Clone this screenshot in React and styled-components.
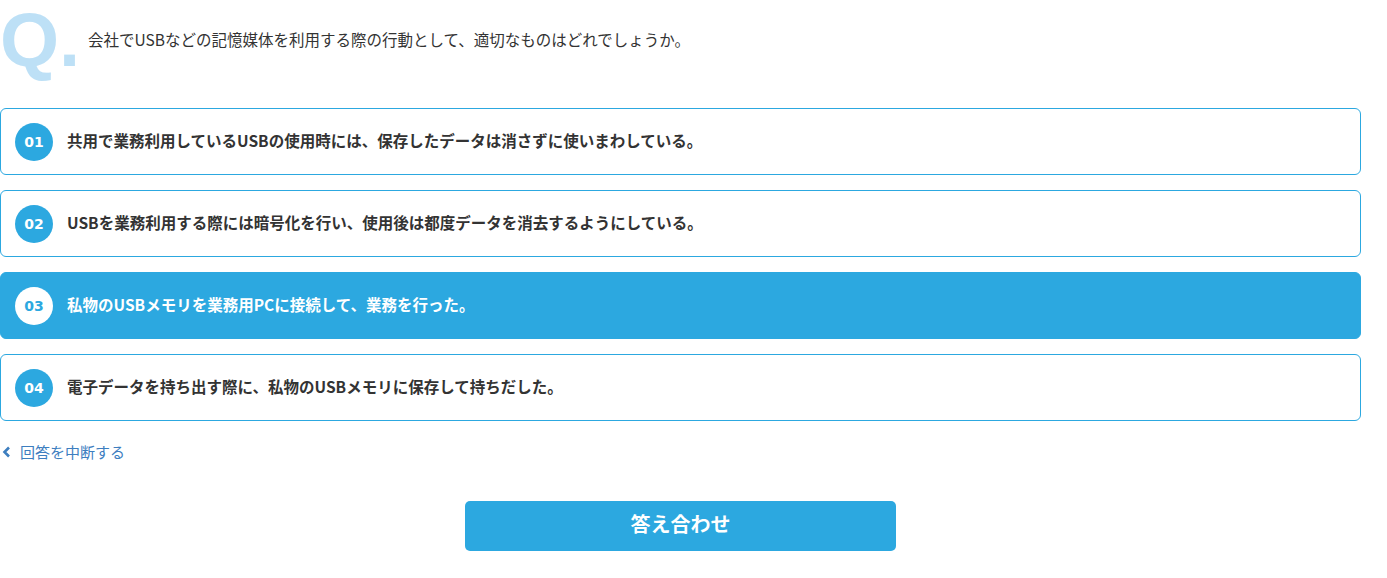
import React from "react";
import styled, { createGlobalStyle } from "styled-components";

const Global = createGlobalStyle`
  html, body { margin: 0; padding: 0; background: #fff; }
  body { font-family: "Noto Sans CJK JP", "Noto Sans", sans-serif; color: #333; }
`;

const Page = styled.div`
  width: 1361px;
  display: flex;
  flex-direction: column;
`;

const Question = styled.div`
  display: flex;
  align-items: flex-start;
  height: 108px;
`;

const QMark = styled.div`
  font-family: "Liberation Sans", Arial, sans-serif;
  font-weight: bold;
  font-size: 76px;
  line-height: 80px;
  color: #bde0f6;
  width: 88px;
  flex-shrink: 0;
`;

const QText = styled.p`
  margin: 28px 0 0 0;
  font-size: 15.5px;
  line-height: 22px;
  color: #333;
`;

const Options = styled.div`
  display: flex;
  flex-direction: column;
  gap: 15px;
`;

const Option = styled.div`
  display: flex;
  align-items: center;
  gap: 14px;
  height: 67px;
  box-sizing: border-box;
  padding: 0 14px;
  border: 1px solid #2ca8e0;
  border-radius: 6px;
  background: ${(p) => (p.$selected ? "#2ca8e0" : "#fff")};
  color: ${(p) => (p.$selected ? "#fff" : "#333")};
`;

const Num = styled.span`
  width: 38px;
  height: 38px;
  border-radius: 50%;
  flex-shrink: 0;
  display: flex;
  align-items: center;
  justify-content: center;
  font-family: "DejaVu Sans", Verdana, sans-serif;
  font-weight: bold;
  font-size: 14px;
  background: ${(p) => (p.$selected ? "#fff" : "#2ca8e0")};
  color: ${(p) => (p.$selected ? "#2ca8e0" : "#fff")};
`;

const OptText = styled.span`
  font-size: 15.5px;
  font-weight: bold;
  padding-bottom: 4px;
`;

const Back = styled.a`
  display: flex;
  align-items: center;
  gap: 8px;
  margin-top: 20px;
  margin-left: 2px;
  font-size: 15px;
  color: #3d7ebf;
  text-decoration: none;
  line-height: 22px;
`;

const Submit = styled.button`
  align-self: center;
  margin-top: 38px;
  width: 431px;
  height: 50px;
  padding: 0 0 5px 0;
  border: none;
  border-radius: 5px;
  background: #2ca8e0;
  color: #fff;
  font-family: "Noto Sans CJK JP", sans-serif;
  font-weight: bold;
  font-size: 20px;
`;

const Chevron = () => (
  <svg width="10" height="12" viewBox="0 0 10 12">
    <path d="M7 1.5 L2.5 6 L7 10.5" fill="none" stroke="#3d7ebf" strokeWidth="2.6" />
  </svg>
);

const options = [
  "共用で業務利用しているUSBの使用時には、保存したデータは消さずに使いまわしている。",
  "USBを業務利用する際には暗号化を行い、使用後は都度データを消去するようにしている。",
  "私物のUSBメモリを業務用PCに接続して、業務を行った。",
  "電子データを持ち出す際に、私物のUSBメモリに保存して持ちだした。",
];

export default function App() {
  return (
    <>
      <Global />
      <Page>
        <Question>
          <QMark>Q.</QMark>
          <QText>会社でUSBなどの記憶媒体を利用する際の行動として、適切なものはどれでしょうか。</QText>
        </Question>
        <Options>
          {options.map((t, i) => (
            <Option key={i} $selected={i === 2}>
              <Num $selected={i === 2}>{`0${i + 1}`}</Num>
              <OptText>{t}</OptText>
            </Option>
          ))}
        </Options>
        <Back href="#">
          <Chevron />
          回答を中断する
        </Back>
        <Submit>答え合わせ</Submit>
      </Page>
    </>
  );
}
